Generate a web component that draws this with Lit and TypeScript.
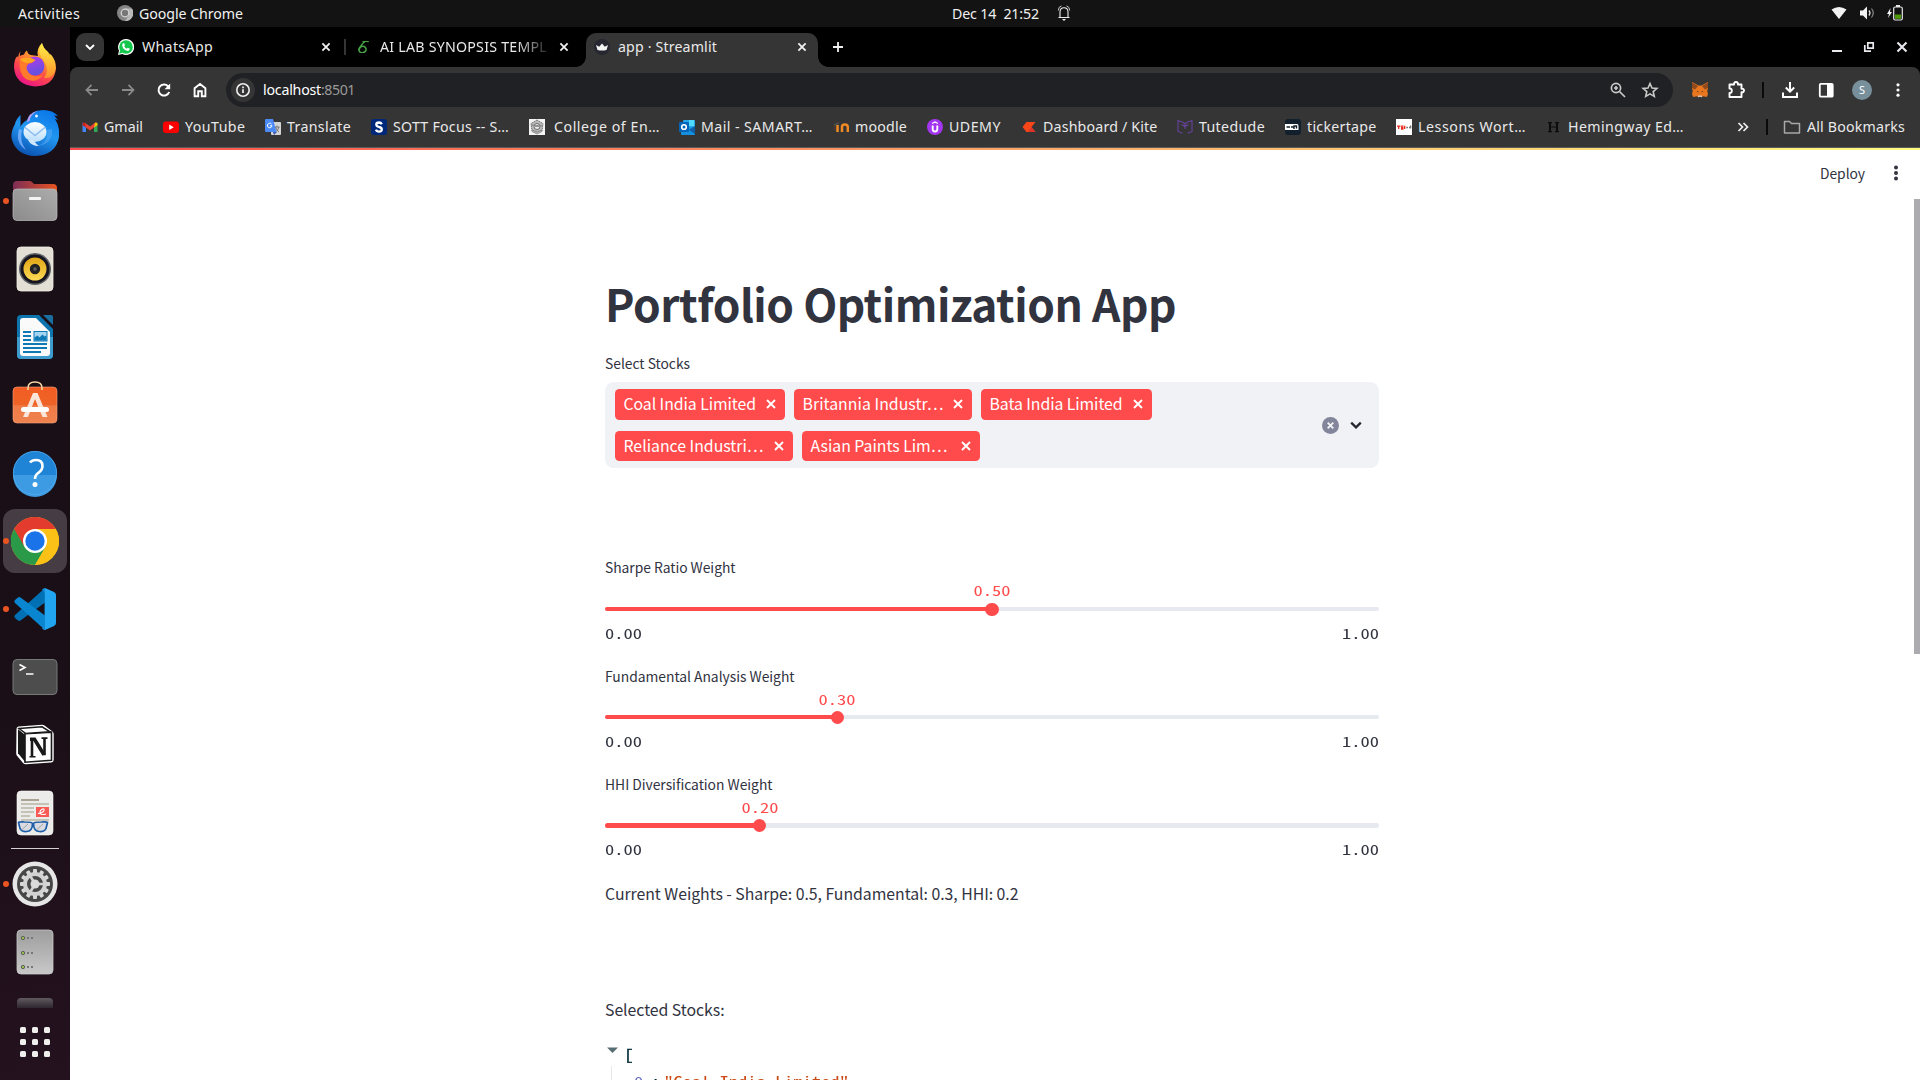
import { LitElement, html, css, svg } from "lit";
import { customElement, property, query } from "lit/decorators.js";

/** One line of text tracked out or in so that it fills a given width. */
@customElement("fit-label")
export class FitLabel extends LitElement {
  @property() text = "";
  @property({ type: Number }) w = 0;
  @query("span") span!: HTMLSpanElement;
  static styles = css`
    :host { display: block; flex: none; white-space: pre; }
    span { display: inline-block; }
  `;
  updated() {
    const s = this.span;
    s.style.letterSpacing = "0px";
    if (!this.w) return;
    const natural = s.getBoundingClientRect().width;
    const gap = (this.w - natural) / this.text.length;
    s.style.letterSpacing = gap.toFixed(3) + "px";
  }
  render() {
    return html`<span>${this.text}</span>`;
  }
}

/** Monospaced text whose half-em glyphs are widened to a 0.66em cell. */
@customElement("code-text")
export class CodeText extends LitElement {
  @property() text = "";
  static styles = css`
    :host { display: block; flex: none; white-space: pre; height: 20px;
      font: 14px/20px "Noto Sans Mono CJK SC", "Liberation Mono", monospace; }
    span { display: inline-block; transform: scaleX(1.32); transform-origin: 0 50%; }
  `;
  render() {
    return html`<div style="width:${(this.text.length * 9.24).toFixed(2)}px"><span>${this.text}</span></div>`;
  }
}

const label = (text: string, w: number) => html`<fit-label .text=${text} .w=${w}></fit-label>`;
const code = (text: string) => html`<code-text .text=${text}></code-text>`;
const icon = (size: number, body: unknown, box = size) =>
  html`<svg class="ic" width=${size} height=${size} viewBox="0 0 ${box} ${box}" fill="none">${body}</svg>`;

const cross = (c: string, sw = 2) => icon(12, svg`<path d="M2.4 2.4l7.2 7.2M9.6 2.4L2.4 9.6" stroke=${c} stroke-width=${sw}/>`);

/* ---------- dock icons, 48 x 48 ---------- */
const firefox = svg`
  <defs>
    <linearGradient id="ff1" x1=".8" y1="0" x2=".3" y2="1"><stop offset="0" stop-color="#fff44f"/><stop offset=".35" stop-color="#ffa02d"/><stop offset=".65" stop-color="#ff4a4a"/><stop offset="1" stop-color="#e8128a"/></linearGradient>
    <linearGradient id="ff2" x1=".3" y1="0" x2=".6" y2="1"><stop offset="0" stop-color="#b03be8"/><stop offset="1" stop-color="#5b54e0"/></linearGradient>
    <linearGradient id="ff3" x1="0" y1="0" x2="0" y2="1"><stop offset="0" stop-color="#fff04a"/><stop offset="1" stop-color="#ff9a2a"/></linearGradient>
  </defs>
  <path d="M9.500 10 Q8.500 13 9 15 Q10 14 13 13.500 Q14 10.500 16 9.500 Q16.500 13 19.500 14 L27 15 Q25 8 31 2 Q32 7 37 11 L38.500 15 L39.500 13 Q45 19 45 27 Q43.500 45 24 45.500 Q4 44 3 26 Q3 18 6.500 15 L7 17 Q7.500 12.500 9.500 10Z" fill="url(#ff1)"/>
  <path d="M31 2 Q32 7 37 11 Q44.500 18 44.500 28 Q42 38 33 37 Q39 29 33 20 Q25 11 31 2Z" fill="url(#ff3)" opacity=".85"/>
  <circle cx="24" cy="25" r="9.500" fill="url(#ff2)"/>
  <path d="M9 19 Q13 15.500 18 17 Q23 17.500 24 19.500 Q22 22 18 22.500 Q14.500 24.500 16 29 Q20 38 32 34 Q25 43 15 38 Q7 32 9 19Z" fill="#ff7a2b"/>
  <path d="M9 18 Q14 15.500 18 17 Q23 17.500 24 19.500 Q21 21.500 17 22 Q12 22 9 18Z" fill="#ffa820"/>`;
const thunderbird = svg`
  <defs><linearGradient id="tb1" x1=".8" y1="0" x2=".4" y2="1"><stop offset="0" stop-color="#0a76e8"/><stop offset=".5" stop-color="#2196f0"/><stop offset="1" stop-color="#0b55b4"/></linearGradient>
  <linearGradient id="tb2" x1="0" y1="0" x2="0" y2="1"><stop offset="0" stop-color="#ffffff"/><stop offset="1" stop-color="#b9defa"/></linearGradient></defs>
  <path d="M4 15 Q-1 24 1 31 Q6 46.500 24 47 Q45 46 48 28 Q49 17 44 10 L47 11 L43 6.500 L47 7 Q42 1 32 1 Q20 1 16 11 Q11 14 9.500 18 L9.500 6 Q5 10 4 15Z" fill="url(#tb1)"/>
  <path d="M16 13 Q17 4 27 1.500 Q19 6 18.500 12Z" fill="#b79cf0"/>
  <path d="M8 20 Q4 34 15 41 Q8 32 11 21Z" fill="#7fb5ff" opacity=".8"/>
  <ellipse cx="24" cy="23" rx="11.500" ry="10" fill="url(#tb2)"/>
  <path d="M13.500 18 L24 26.500 L34.500 18" stroke="#8cbcf0" stroke-width="1.500"/>
  <path d="M17 31 Q20 37 28 37 Q23 33 23 31Z" fill="#cfe7ff"/>
  <path d="M36 21 Q38 32 27 37 Q42 35 41 20Z" fill="#5eaef8" opacity=".5"/>
  <circle cx="25.500" cy="7" r="1.500" fill="#eaf4ff"/>`;
const files = svg`
  <defs><linearGradient id="fi1"><stop offset="0" stop-color="#7c2d56"/><stop offset="1" stop-color="#e95420"/></linearGradient>
  <linearGradient id="fi2" x1="0" y1="1" x2="1" y2="0"><stop offset="0" stop-color="#8b8b8b"/><stop offset="1" stop-color="#acacac"/></linearGradient></defs>
  <path d="M2 8q0-4 4-4h13q1.500 0 2.500 1.500L23 7h19q4 0 4 4v10H2z" fill="url(#fi1)"/>
  <rect x="2" y="12" width="44" height="31.500" rx="4" fill="url(#fi2)" stroke="#bdbdbd" stroke-width=".7"/>
  <rect x="18" y="20" width="12" height="3" rx="1" fill="#f4f4f4"/>`;
const speaker = svg`
  <defs><radialGradient id="sp1"><stop offset="0" stop-color="#777"/><stop offset=".5" stop-color="#222"/></radialGradient>
  <linearGradient id="sp2" x1="0" y1="0" x2="0" y2="1"><stop offset="0" stop-color="#e2a516"/><stop offset="1" stop-color="#fbda55"/></linearGradient></defs>
  <rect x="6" y="2" width="36" height="44" rx="4" fill="#e3dfd4" stroke="#f2efe8" stroke-width=".8"/>
  <circle cx="24" cy="24" r="16" fill="#5f6265"/><circle cx="24" cy="24" r="14.500" fill="#17151f"/>
  <circle cx="24" cy="24" r="11.500" fill="url(#sp2)"/><circle cx="24" cy="24" r="5.200" fill="url(#sp1)"/>`;
const writer = svg`
  <path d="M10 2h18l14 14v26q0 4-4 4H10q-4 0-4-4V6q0-4 4-4z" fill="#0d74ad"/>
  <path d="M6 24h36v18q0 4-4 4H10q-4 0-4-4z" fill="#3d9bce"/>
  <path d="M32 2h8q2 0 2 2v8z" fill="#1a6f9f"/>
  <path d="M12 5h13l14 14v21q0 3-3 3H12q-3 0-3-3V8q0-3 3-3z" fill="#fafafa"/>
  <path d="M12 19h8M12 23h8M12 27h8M12 31h24M12 35h24M12 39h18" stroke="#0d79b5" stroke-width="2"/>
  <rect x="23" y="18.500" width="13" height="9.500" fill="#a5d4f0" stroke="#0d79b5"/>
  <path d="M23.500 27.500v-3l3-2 2 2 3-3 2 2 2-1v5z" fill="#0d79b5"/>`;
const software = svg`
  <defs><linearGradient id="so1" x1="0" y1="0" x2="0" y2="1"><stop offset="0" stop-color="#f25c22"/><stop offset=".5" stop-color="#ee6427"/><stop offset=".52" stop-color="#f07a45"/><stop offset="1" stop-color="#ee8350"/></linearGradient></defs>
  <rect x="2" y="6" width="44" height="36" rx="4" fill="url(#so1)" stroke="#f7a27c" stroke-width=".6"/>
  <path d="M17 9V7q0-6 7-6t7 6v2" stroke="#f8d9a5" stroke-width="1.500"/>
  <path d="M22 12h4.500l10 24h-5L24 18l-7 18h-5z" fill="#fbe4da"/>
  <rect x="10" y="26" width="28" height="5" rx="2.500" fill="#fff"/>`;
const help = svg`
  <circle cx="24" cy="24" r="22" fill="#1f84d6"/>
  <path d="M2 26h44a22 22 0 0 1-44 0z" fill="#3c9be2"/>
  <circle cx="24" cy="24" r="21.600" stroke="#54aaea" stroke-width=".8"/>
  <path d="M19 13.500Q21 11 25 11q6.500 0 6.500 6 0 4-3.800 6.600-3.700 2.400-3.700 6.400" stroke="#fff" stroke-width="2.600"/>
  <circle cx="24" cy="35.500" r="2.500" fill="#fff"/>`;
const chrome = svg`
  <circle cx="24" cy="24" r="24" fill="#fbc116"/>
  <path d="M24 24L3.200 12A24 24 0 0 0 24 48l12-20z" fill="#2a9a48"/>
  <path d="M3.200 12A24 24 0 0 1 44.800 12H24L13.600 30z" fill="#e33b2e"/>
  <path d="M44.800 12H24l10.400 18L24 48A24 24 0 0 0 44.800 12z" fill="#fbc116"/>
  <circle cx="24" cy="24" r="12" fill="#fff"/><circle cx="24" cy="24" r="9.700" fill="#1a73e8"/>`;
const vscode = svg`
  <path d="M34 3L4 30q-1.500 1.500 0 3l3 2.600q1 .8 2.500 0L36 16z" fill="#0070b5"/>
  <path d="M34 45L4 18q-1.500-1.500 0-3l3-2.600q1-.8 2.500 0L36 32z" fill="#0a86d1"/>
  <path d="M34 3l9 4q2 1 2 3v28q0 2-2 3l-9 4z" fill="#22a5f1"/>
  <path d="M34 3v42q-1.500 0-3-1.500l2.500-3V8L31 4.500Q32.500 3 34 3z" fill="#1487d0"/>`;
const terminal = svg`
  <rect x="2" y="6.500" width="44" height="35" rx="4" fill="#4d4d4d" stroke="#747a78" stroke-width="1"/>
  <path d="M8.500 11.500l5.500 3-5.500 3" stroke="#fff" stroke-width="1.600"/><path d="M15 21h7.500" stroke="#fff" stroke-width="1.500"/>`;
const notion = svg`
  <g transform="translate(0 .8)"><path d="M5.500 7q0-2 2-2.200L31 3q1.500 0 2.500.8l8 6q1.200 1 1.200 2.500V38q0 2.500-2.500 2.700L15 42.400q-2 0-3-1.300L6 34q-.8-1-.8-2.500z" fill="#fff"/>
  <path d="M7 7.500l7 5.500v27l-7-8.500z" fill="#191919"/><path d="M14 12l26.500-1.600v28L14 40.400z" fill="#fff" stroke="#191919" stroke-width="1.600"/>
  <path d="M8 6.700L31 5l8 5-24.500 1.600z" fill="#fff" stroke="#191919" stroke-width="1.400"/>
  <path d="M21 17.500v17M33.500 16.500v17" stroke="#191919" stroke-width="2.600"/><path d="M19 17.500h4.500l9.500 15.500" stroke="#191919" stroke-width="3.600"/>
  <path d="M18.500 35h6M30.500 16.300h6" stroke="#191919" stroke-width="1.600"/></g>`;
const viewer = svg`
  <rect x="6" y="2" width="36" height="44" rx="4" fill="#ebebea" stroke="#fafafa" stroke-width=".6"/>
  <path d="M10 11h18" stroke="#aaa392" stroke-width="2"/>
  <path d="M10 15h28M10 19h13M10 23h13M10 27h9M10 31h28" stroke="#c5c2b6" stroke-width="2"/>
  <rect x="25" y="18" width="13" height="10" fill="#f75b54"/>
  <path d="M27 24.500q5-.5 6-3 .5-2-1.500-1.500-3 1.500-2.500 4 .5 2.500 6 1" stroke="#fff" stroke-width="1.100"/>
  <path d="M7.500 33.500q.5-.8 6-.5 8 0 8 1.500 0 8-6 8-6.500.5-7-5zM36.500 33.500q-.5-.8-6-.5-8 0-8 1.500 0 8 6 8 6.500.5 7-5z" fill="#d9dbe0" stroke="#1e5ea8" stroke-width="1.700"/>
  <path d="M11 40.500l6-5.500M26 40.500l6-5.500" stroke="#a2a4a8"/>`;
const teeth = Array.from({ length: 12 }, (_, i) => svg`<rect x="22" y="9" width="4" height="5" rx="1" fill="#d9d9d9" transform="rotate(${i * 30} 24 24)"/>`);
const settings = svg`
  <circle cx="24" cy="24" r="22.500" fill="#e6e6e6"/><circle cx="24" cy="24" r="18" fill="#474747"/>
  ${teeth}<circle cx="24" cy="24" r="10" stroke="#d2d2d2" stroke-width="4"/>
  <path d="M24 24L19 15.500M24 24L19 32.500M24 24h10" stroke="#d2d2d2" stroke-width="2.600"/>
  <circle cx="24" cy="24" r="4.500" fill="#dadada"/>`;
const disk = svg`
  <defs><linearGradient id="dk" x1="0" y1="0" x2="0" y2="1"><stop offset="0" stop-color="#9d9d9d"/><stop offset="1" stop-color="#c8c8c8"/></linearGradient></defs>
  <rect x="6" y="2" width="36" height="44" rx="4" fill="url(#dk)" stroke="#c9c9c9" stroke-width=".8"/>
  ${[10, 25, 39].map((y) => svg`<circle cx="12" cy=${y} r="1.700" fill="#97c04a" stroke="#5c6158" stroke-width="1"/><path d="M16 ${y}h2M20 ${y}h2" stroke="#777" stroke-width="2"/>`)}`;

interface DockItem { art: unknown; running?: boolean; active?: boolean }
const dockTop: DockItem[] = [
  { art: firefox }, { art: thunderbird }, { art: files, running: true }, { art: speaker }, { art: writer },
  { art: software }, { art: help }, { art: chrome, running: true, active: true }, { art: vscode, running: true },
  { art: terminal }, { art: notion }, { art: viewer },
];
const dockBottom: DockItem[] = [{ art: settings, running: true }, { art: disk }];

/* ---------- bookmark icons, 16 x 16 ---------- */
const bm = {
  gmail: svg`<path d="M.5 3.500V13H4V7z" fill="#4285f4"/><path d="M12 7v6h3.500V3.500z" fill="#34a853"/><path d="M12 4.500l1.500-1q2-.5 2 1.500v1.200L12 8.500z" fill="#fbbc04"/><path d="M.5 6.200V5q0-2 2-1.500L4 4.500v4z" fill="#c5221f"/><path d="M3 3.700l5 3.800 5-3.800L12 8.500l-4 3-4-3z" fill="#ea4335"/>`,
  youtube: svg`<rect x="0" y="2.500" width="16" height="11.500" rx="3" fill="#f00"/><path d="M6.200 5.500v5.400l4.600-2.700z" fill="#fff"/>`,
  translate: svg`<rect x="6" y="3" width="10" height="13" rx="1" fill="#d4d4d4"/><path d="M9.500 8h5M12 6.500V8M10.500 8q1 3.500 3.500 5M14 8q-1 3.500-3.500 5" stroke="#666" stroke-width=".8"/><path d="M8 13h4l-3 3z" fill="#3a56b5"/><path d="M1 0h7l3.500 13H1q-1 0-1-1V1q0-1 1-1z" fill="#4c8bf5"/><path d="M6.500 5A2.300 2.300 0 1 0 7 6.800H5" stroke="#fff" stroke-width="1"/>`,
  sott: svg`<rect x="0" y="0" width="16" height="16" rx="3" fill="#00287a"/><path d="M10.800 5.200Q10 3.500 8 3.500 5.300 3.600 5.300 5.500T8 8q2.800.5 2.800 2.500T8 12.600q-2.300 0-3-2" stroke="#fff" stroke-width="2.300"/>`,
  college: svg`<rect width="16" height="16" fill="#f4f4f4"/><path d="M8 1l6 3.500-1 8L8 15l-5-2.500-1-8z" fill="#b9b9b9" stroke="#777" stroke-dasharray="1.500 .7"/><circle cx="8" cy="7.500" r="3" fill="#eee" stroke="#6a6a6a"/><path d="M2 6l12 1M6 7.500h4M3 11l5 2 5-2" stroke="#777" stroke-width=".8"/>`,
  outlook: svg`<rect x="4" y="1" width="12" height="13" rx="1" fill="#28a8ea"/><rect x="10" y="1" width="5" height="6" fill="#50d9ff"/><path d="M2 9l14-1v7q0 1-1 1H3q-1 0-1-1z" fill="#1490df"/><path d="M10 11l6-4v8z" fill="#0f5fa8"/><rect x="0" y="3" width="10" height="10" rx="1" fill="#0364b8"/><circle cx="5" cy="8" r="2.300" stroke="#fff" stroke-width="1.600"/>`,
  moodle: svg`<path d="M1 6l5-2" stroke="#4b4b4b" stroke-width="2"/><path d="M1.500 7v4" stroke="#5b3b28"/><path d="M4.500 13V6M9 13V8q0-2.500 2.800-2.500T14.800 8v5" stroke="#f08a24" stroke-width="2.500"/>`,
  udemy: svg`<circle cx="8" cy="8" r="8" fill="#a435f0"/><path d="M5.200 4.600L8 3l2.800 1.600" stroke="#fff" stroke-width="1.200"/><path d="M5.700 6.500V10q0 2.500 2.300 2.500T10.300 10V6.500" stroke="#fff" stroke-width="1.900"/>`,
  kite: svg`<path d="M5.500 3h9L10.500 8l4 5h-9L1.500 8z" fill="#f6461a"/><path d="M10.500 8l4 5H7z" fill="#db342b"/>`,
  tutedude: svg`<path d="M1 13V1.500l5 1.800L8 5l2-1.700 5-1.800V13M1 12.500l4.500 1.800M15 12.500l-4.500 1.800M8 5v5M4.500 5.500L8 7.500l3.500-2" stroke="#66429a" stroke-width="1.100"/>`,
  ticker: svg`<rect width="16" height="16" rx="3" fill="#12202e"/><path d="M0 5h12q1.500 0 1.500 2v4H0z" fill="#fff"/><path d="M1.500 8H5M6 8h2.500M9 10V7h2.500v2.500" stroke="#12202e" stroke-width="1.400"/>`,
  lessons: svg`<rect width="16" height="16" fill="#fff"/><path d="M1 7.200h3.500M2.700 7v3M5 7.200h2.500M5 8.700h2.500M5 10h2.500M8.700 6.700v3.300" stroke="#e62b1e" stroke-width="1.300"/><path d="M10.300 8.500h1.700M13 8.500h2M14.600 6.500v3" stroke="#777" stroke-width="1.400"/>`,
  hemingway: svg`<path d="M4 4v8.500M11 4v8.500" stroke="#0c0c0c" stroke-width="2"/><path d="M2 3.700h4M2 12.700h4M9 3.700h4M9 12.700h4M4 8h7" stroke="#0c0c0c" stroke-width="1.200"/>`,
};
interface Bookmark { art: unknown; text: string; w: number; pitch: number; gap?: number }
const bookmarks: Bookmark[] = [
  { art: bm.gmail, text: "Gmail", w: 39, pitch: 81 },
  { art: bm.youtube, text: "YouTube", w: 60.5, pitch: 102 },
  { art: bm.translate, text: "Translate", w: 64, pitch: 106 },
  { art: bm.sott, text: "SOTT Focus -- S…", w: 116, pitch: 158 },
  { art: bm.college, text: "College of En…", w: 106, pitch: 150, gap: 9 },
  { art: bm.outlook, text: "Mail - SAMART…", w: 112, pitch: 154 },
  { art: bm.moodle, text: "moodle", w: 52, pitch: 94 },
  { art: bm.udemy, text: "UDEMY", w: 52, pitch: 94 },
  { art: bm.kite, text: "Dashboard / Kite", w: 114.5, pitch: 156 },
  { art: bm.tutedude, text: "Tutedude", w: 66, pitch: 108 },
  { art: bm.ticker, text: "tickertape", w: 69.5, pitch: 111 },
  { art: bm.lessons, text: "Lessons Wort…", w: 108, pitch: 150 },
  { art: bm.hemingway, text: "Hemingway Ed…", w: 116, pitch: 140 },
];

@customElement("ubuntu-dock")
export class UbuntuDock extends LitElement {
  static styles = css`
    :host { display: flex; flex-direction: column; width: 70px; flex: none; padding-top: 4px; box-sizing: border-box;
      overflow: hidden; background: linear-gradient(170deg, #190f17 0%, #1a0f16 60%, #24121f 100%); }
    .slot { height: 68px; flex: none; display: grid; grid-template-columns: 11px 48px 11px; align-items: center; }
    .dot { width: 6px; height: 6px; border-radius: 50%; background: #e95420; margin-left: 3px; }
    .blank { background: none; }
    .active { background: #463d44; border-radius: 12px; height: 64px; margin: 2px 3px; grid-template-columns: 8px 48px 8px; }
    .active .dot { margin-left: 0; }
    .ic { display: block; }
    .rule { height: 1px; flex: none; margin: 1px 11px; background: #d5d1d3; }
    .peek { height: 10px; flex: none; width: 36px; margin: 12px 17px 0; border-radius: 4px 4px 0 0; background: linear-gradient(#605a5f, #2f2630); }
    .apps { display: grid; grid-template-columns: repeat(3, 6px); grid-auto-rows: 6px; gap: 6px; margin: 19px 20px 0; }
    .apps i { background: #f0efee; border-radius: 1.5px; }
  `;
  private slotFor(d: DockItem) {
    return html`<div class="slot ${d.active ? "active" : ""}"><span class="dot ${d.running ? "" : "blank"}"></span>${icon(48, d.art)}</div>`;
  }
  render() {
    return html`${dockTop.map((d) => this.slotFor(d))}
      <div class="rule"></div>
      ${dockBottom.map((d) => this.slotFor(d))}
      <div class="peek"></div>
      <div class="apps">${Array.from({ length: 9 }, () => html`<i></i>`)}</div>`;
  }
}

@customElement("top-bar")
export class TopBar extends LitElement {
  static styles = css`
    :host { display: grid; grid-template-columns: 1fr auto 1fr; align-items: center; height: 27px; background: #131313;
      color: #f0f0f0; font-size: 14.2px; }
    .l, .m, .r { display: flex; align-items: center; height: 27px; box-sizing: border-box; }
    .l, .m { line-height: 25px; padding-bottom: 1px; }
    .l { padding-left: 18px; }
    .l .ic { margin: 0 6px 0 37px; }
    .m { padding-left: 104px; }
    .m .ic { margin-left: 17px; }
    .r { justify-content: flex-end; gap: 12px; padding-right: 17px; padding-bottom: 1px; }
    .ic { display: block; flex: none; }
  `;
  render() {
    return html`
      <div class="l">${label("Activities", 62)}
        ${icon(16, svg`<circle cx="8" cy="8" r="8" fill="#858585"/><path d="M8 3.500h7A8 8 0 0 1 8 16l4-6z" fill="#b9b9b9"/><circle cx="8" cy="8" r="4.400" fill="#d8d8d8"/><circle cx="8" cy="8" r="3.200" fill="#777"/>`)}
        ${label("Google Chrome", 104)}</div>
      <div class="m">${label("Dec 14  21:52", 87)}
        ${icon(16, svg`<path d="M2.500 12.500h11M4 12V7q0-4.300 4-4.300T12 7v5" stroke="#eee" stroke-width="1.100"/><path d="M5.500 1Q2.500 1.500 2.300 5.500M10.500 1q3 .5 3.200 4.500" stroke="#ccc" stroke-width="1"/><path d="M6 14h4l-2 2z" fill="#eee"/>`)}</div>
      <div class="r">
        ${icon(16, svg`<path d="M.5 4.500Q8-.7 15.500 4.500L8 14z" fill="#f2f2f2"/>`)}
        ${icon(16, svg`<path d="M1 5.500h3l4-4v13l-4-4H1z" fill="#f2f2f2"/><path d="M10 5.500q2 2.500 0 5" stroke="#ddd" stroke-width="1.300"/><path d="M12.500 3.500q3.500 4.500 0 9" stroke="#8a8a8a" stroke-width="1.200"/>`)}
        ${icon(16, svg`<path d="M3.500 3L0 9h2l-1 4 4-6H3z" fill="#f2f2f2"/><rect x="6.700" y="2" width="8.600" height="13" rx="1.500" stroke="#e8e8e8" stroke-width="1.200"/><rect x="9" y="0" width="4" height="2" fill="#e8e8e8"/><rect x="8" y="9.500" width="6" height="4.300" fill="#4e9a06"/>`)}
      </div>`;
  }
}

@customElement("browser-chrome")
export class BrowserChrome extends LitElement {
  static styles = css`
    :host { display: block; color: #e9e9e9; font-size: 14.2px; background: #000; }
    .ic { display: block; flex: none; }
    .tabs { height: 40px; display: flex; align-items: center; box-sizing: border-box; padding-left: 6px; line-height: 40px; }
    .menu { width: 28px; height: 28px; border-radius: 9px; background: #353535; display: grid; place-items: center; margin-right: 14px; }
    .tab { display: flex; align-items: center; height: 40px; }
    .tab .name { margin-left: 8px; flex: 1; min-width: 0; overflow: hidden; }
    .t1 { width: 214px; }
    .sep { width: 2px; height: 16px; background: #353535; margin: 0 11px 0 12px; }
    .t2 { width: 213px; }
    .t2 .name { flex: none; width: 167px; margin-left: 11px; margin-right: 11px;
      -webkit-mask-image: linear-gradient(90deg, #000 82%, transparent 103%); }
    .t3 { width: 232px; height: 34px; margin: 6px 0 0 16px; padding: 0 10px 0 8px; box-sizing: border-box; background: #353535;
      border-radius: 10px 10px 0 0; line-height: 28px; align-items: flex-start; position: relative; }
    .t3 > .ic { margin-top: 6px; }
    .t3 > .ic.x { margin-top: 8px; }
    .t3::before, .t3::after { content: ""; position: absolute; bottom: 0; width: 10px; height: 10px; }
    .t3::before { left: -10px; background: radial-gradient(circle at 0 0, transparent 9.5px, #353535 10px); }
    .t3::after { right: -10px; background: radial-gradient(circle at 100% 0, transparent 9.5px, #353535 10px); }
    .plus { margin-left: 14px; }
    .win { margin-left: auto; display: flex; gap: 20px; padding-right: 12px; }
    .win .ic + .ic + .ic { margin-left: 1px; }
    .tools { height: 46px; background: #353535; border-radius: 8px 8px 0 0; display: flex; align-items: center; padding: 0 12px; }
    .nav { display: flex; gap: 16px; margin-right: 16px; }
    .omni { width: 1448px; height: 34px; border-radius: 17px; background: #202124; display: flex; align-items: center;
      box-sizing: border-box; padding: 0 13px 0 5px; line-height: 34px; }
    .info { width: 24px; height: 24px; border-radius: 50%; background: #353535; display: grid; place-items: center; margin-right: 8px; }
    .host { color: #fff; }
    .port { color: #9a9a9a; margin-right: auto; }
    .omni .star { margin-left: 12px; }
    .ext { display: flex; align-items: center; margin-left: 18.500px; }
    .ext .puzzle { margin-left: 18.500px; }
    .ext .bar { width: 2px; height: 16px; background: #0a0a0a; margin: 0 16px 0 16px; }
    .ext .panel { margin: 0 16px; }
    .ext .kebab { margin-left: 16px; }
    .avatar { width: 20px; height: 20px; border-radius: 50%; background: #78909c; font-size: 11px; line-height: 20px; text-align: center; color: #fff; }
    .marks { height: 34px; background: #353535; display: flex; align-items: center; padding: 0 15px 6px 12px; line-height: 28px; box-sizing: border-box; }
    .mark { display: flex; align-items: center; flex: none; }
    .more { margin: 0 17px 0 51px; }
    .marks .bar { width: 2px; height: 16px; background: #0a0a0a; margin-right: 15px; }
    .marks .all { margin-left: 6px; }
    .edge { height: 1px; background: #5b5b5b; }
  `;
  render() {
    const b = "#8a8a8a", w = "#fff";
    return html`
      <div class="tabs">
        <div class="menu">${icon(12, svg`<path d="M2 4l4 4 4-4" stroke="#fff" stroke-width="1.900"/>`)}</div>
        <div class="tab t1">
          ${icon(16, svg`<path d="M8 0a8 8 0 1 1-3.700 15L0 16l1-4.200A8 8 0 0 1 8 0z" fill="#fff"/><circle cx="8" cy="8" r="6.800" fill="#13c74d"/><path d="M1.200 14.800l1-3.800 2.600 2.800z" fill="#13c74d"/><path d="M5 4.200l1.100-.1L7 6.200l-.8 1Q7 8.900 8.800 9.700l.9-.9 2.100 1q0 1.900-2 2.100Q5 11.200 4.200 6.500 4.100 5.200 5 4.200z" fill="#fff"/>`)}
          <div class="name">${label("WhatsApp", 71)}</div>${cross("#f0f0f0", 1.8)}
        </div>
        <div class="sep"></div>
        <div class="tab t2">
          ${icon(12, svg`<path d="M11.500 .2Q9.500 -1.300 5.500 0M8.500 -.5Q4 2.500 2 8.500" stroke="#46a247" stroke-width="1.500" transform="translate(0 .6)"/><ellipse cx="5.500" cy="8.500" rx="3.600" ry="3.200" stroke="#46a247" stroke-width="1.600" transform="rotate(-20 5.500 8.500)"/>`)}
          <div class="name">${label("AI LAB SYNOPSIS TEMPL", 167)}</div>${cross("#f0f0f0", 1.8)}
        </div>
        <div class="tab t3">
          ${icon(16, svg`<circle cx="8" cy="8" r="8" fill="#262730"/><path d="M2 6l3.200 1.700L8 4.500l2.800 3.200L14 6l-1.500 5q-4.500 1-9 0z" fill="#f4f4f4"/>`)}
          <div class="name">${label("app · Streamlit", 99)}</div>
          <svg class="ic x" width="12" height="12" viewBox="0 0 12 12"><path d="M2.400 2.400l7.200 7.200M9.600 2.400L2.400 9.600" stroke="#f0f0f0" stroke-width="1.800"/></svg>
        </div>
        <div class="plus">${icon(12, svg`<path d="M6 1v10M1 6h10" stroke="#f0f0f0" stroke-width="1.800"/>`)}</div>
        <div class="win">
          ${icon(12, svg`<path d="M1 10h10" stroke="#e9e9ee" stroke-width="2"/>`)}
          ${icon(12, svg`<path d="M4.800 1.800h5.400v5.400H4.800z" stroke="#e9e9ee" stroke-width="1.700"/><path d="M1.800 4v6.200H8" stroke="#e9e9ee" stroke-width="1.700"/>`)}
          ${icon(12, svg`<path d="M1.500 1.500l9 9M10.500 1.500l-9 9" stroke="#e9e9ee" stroke-width="2.100"/>`)}
        </div>
      </div>
      <div class="tools">
        <div class="nav">
          ${icon(20, svg`<path d="M16 10H5M9.500 4.800L4.500 10l5 5.200" stroke=${b} stroke-width="1.800"/>`)}
          ${icon(20, svg`<path d="M4 10h11M10.500 4.800l5 5.200-5 5.200" stroke=${b} stroke-width="1.800"/>`)}
          ${icon(20, svg`<path d="M15.200 12A5.500 5.500 0 1 1 14 6.200l1 1.200" stroke=${w} stroke-width="2"/><path d="M16.200 3.500v5.700h-5.700z" fill=${w}/>`)}
          ${icon(20, svg`<path d="M4.600 16.200V8.300L10 4l5.400 4.300v7.900h-3.600v-5H8.200v5z" stroke=${w} stroke-width="1.900"/>`)}
        </div>
        <div class="omni">
          <div class="info">${icon(16, svg`<circle cx="8" cy="8" r="6.200" stroke="#f0f0f0" stroke-width="1.600"/><path d="M8 7.200V11M8 4.600v1.600" stroke="#f0f0f0" stroke-width="1.700"/>`)}</div>
          <span class="host">${label("localhost", 58)}</span><span class="port">${label(":8501", 34)}</span>
          ${icon(20, svg`<circle cx="8" cy="8" r="4.600" stroke="#c9c9c9" stroke-width="1.700"/><path d="M11.500 11.500L17 17M8 6v4M6 8h4" stroke="#c9c9c9" stroke-width="1.700"/>`)}
          <span class="star">${icon(20, svg`<path d="M10 3.500l2 4.500 4.900.4-3.700 3.200 1.100 4.800L10 13.900l-4.300 2.500 1.100-4.800L3.100 8.400 8 8z" stroke="#c9c9c9" stroke-width="1.600"/>`)}</span>
        </div>
        <div class="ext">
          ${icon(16, svg`<path d="M0 0l6.500 3.500h3L16 0v6.500L15.200 9l.8 3-1.200 3-4-.8L9.500 16h-3l-1.300-1.800-4 .8L0 12l.8-3L0 6.500z" fill="#e8761e"/><path d="M0 .5L6 4 3 7.500 0 6zM16 .5L10 4l3 3.500L16 6z" fill="#8f4a1e"/><path d="M6 13.500h4V16H6z" fill="#d5bfb2"/><path d="M6.300 15h3.400v1H6.300z" fill="#2d2d2d"/><path d="M4.500 9l2 .5-.3 1zM11.500 9l-2 .5.300 1z" fill="#3a2a20"/>`)}
          <span class="puzzle">${icon(20, svg`<path d="M3.500 4.500h4.600q-.2-2.500 1.900-2.500t1.900 2.500h3.600v4.200q2.500-.2 2.500 1.800t-2.500 1.800V17h-12v-4q2.300.2 2.300-2.200T3.500 8.500z" stroke="#fff" stroke-width="1.900" stroke-linejoin="round"/>`)}</span>
          <i class="bar"></i>
          ${icon(20, svg`<path d="M10 2v9.500M5.800 7.500L10 11.700l4.200-4.200M3 12.500V17h14v-4.500" stroke="#fff" stroke-width="2"/>`)}
          <span class="panel">${icon(20, svg`<rect x="3.800" y="3.800" width="12.900" height="12.900" rx="1" stroke="#fff" stroke-width="1.800"/><path d="M11 4h5.500v12.500H11z" fill="#fff"/>`)}</span>
          <div class="avatar">S</div>
          <span class="kebab">${icon(20, svg`<circle cx="10" cy="4.800" r="1.600" fill="#fff"/><circle cx="10" cy="10" r="1.600" fill="#fff"/><circle cx="10" cy="15.200" r="1.600" fill="#fff"/>`)}</span>
        </div>
      </div>
      <div class="marks">
        ${bookmarks.map((m) => html`<div class="mark" style="width:${m.pitch}px;gap:${m.gap ?? 6}px">${icon(16, m.art)}${label(m.text, m.w)}</div>`)}
        <span class="more">${icon(12, svg`<path d="M1.500 2l4 4-4 4M6.500 2l4 4-4 4" stroke="#f0f0f0" stroke-width="1.700"/>`)}</span>
        <i class="bar"></i>
        ${icon(18, svg`<path d="M1.500 3.500h5l2 2h8v9.500h-15z" stroke="#a8a8a8" stroke-width="1.500" stroke-linejoin="round"/>`)}
        <span class="all">${label("All Bookmarks", 98)}</span>
      </div>
      <div class="edge"></div>`;
  }
}

@customElement("weight-slider")
export class WeightSlider extends LitElement {
  @property() name = "";
  @property({ type: Number }) w = 0;
  @property({ type: Number }) value = 0;
  static styles = css`
    :host { display: block; height: 108.2px; }
    .name { font-size: 13.87px; line-height: 22px; height: 22px; }
    .row { height: 20px; margin-top: 2px; display: flex; }
    .value { color: #ff4b4b; transform: translateX(-50%); }
    .track { height: 4.4px; margin-top: 6.5px; border-radius: 3px; background: #e6e9f0; }
    .fill { height: 100%; background: #ff4b4b; border-radius: 3px; display: flex; justify-content: flex-end; align-items: center; }
    .thumb { width: 13.2px; height: 13.2px; margin-right: -6.6px; flex: none; border-radius: 50%; background: #ff4b4b; }
    .ends { display: flex; justify-content: space-between; margin-top: 11.6px; }
  `;
  render() {
    const pct = this.value * 100;
    return html`
      <div class="name">${label(this.name, this.w)}</div>
      <div class="row"><span style="width:${pct}%"></span><span class="value">${code(this.value.toFixed(2))}</span></div>
      <div class="track"><div class="fill" style="width:${pct}%"><i class="thumb"></i></div></div>
      <div class="ends">${code("0.00")}${code("1.00")}</div>`;
  }
}

@customElement("streamlit-page")
export class StreamlitPage extends LitElement {
  static styles = css`
    :host { display: flex; flex-direction: column; flex: 1; min-height: 0; background: #fff; color: #31333f; overflow: hidden;
      font-family: "Noto Sans CJK SC", "Noto Sans", sans-serif; font-size: 15.84px; line-height: 24px; }
    .deco { height: 2px; flex: none; background: linear-gradient(90deg, #ff4b4b, #fffd80); }
    .head { height: 49px; flex: none; display: flex; align-items: center; justify-content: flex-end; box-sizing: border-box;
      padding: 0 14px 3px 0; font-size: 13.87px; gap: 21px; }
    .head fit-label { width: 45px; }
    .scroll { flex: 1; min-height: 0; display: flex; overflow: hidden; }
    .thumb { margin-left: auto; width: 6px; height: 455px; background: #acabb0; }
    .col { width: 774px; margin-left: 535px; flex: none; }
    .title { font-size: 44.3px; line-height: 59px; height: 58px; font-weight: 700; margin-top: 75px; }
    .lab { font-size: 13.87px; line-height: 22px; height: 22px; margin: 20px 0 8px; }
    .multi { height: 86px; box-sizing: border-box; border-radius: 8.8px; background: #f0f2f6; display: flex; align-items: center;
      padding: 0 15px 0 10px; margin-bottom: 88.400px; }
    .tags { display: flex; flex-wrap: wrap; gap: 11px 9px; width: 620px; }
    .tag { height: 30.400px; box-sizing: border-box; border-radius: 4.4px; background: #ff4b4b; color: #fff; line-height: 29px;
      display: flex; align-items: center; padding: 0 8.500px; justify-content: space-between; align-items: flex-start; }
    .tag .ic { margin-top: 9px; }
    .ic { display: block; flex: none; }
    .ctl { margin-left: auto; display: flex; align-items: center; gap: 9px; }
    .now { margin-top: .6px; }
    .sel { margin: 92px 0 23px; }
    .json { color: #002b36; }
    .open { display: flex; height: 20px; -webkit-text-stroke: .4px #002b36; }
    .open .ic { margin: 2px 6px 0 2px; }
    .open code-text { margin-top: -1px; }
    .body { border-left: 1px solid #e8e8e8; margin: 1px 0 0 6px; padding: 5px 0 0 22px; height: 40px; display: flex; }
    .k { color: #6c71c4; margin-right: 8px; }
    .s { color: #cb4b16; margin-left: 4px; }
  `;
  render() {
    const tags: [string, number, number][] = [
      ["Coal India Limited", 132.5, 170], ["Britannia Industr…", 141, 178], ["Bata India Limited", 133, 171],
      ["Reliance Industri…", 140, 178], ["Asian Paints Lim…", 137, 178],
    ];
    return html`
      <div class="deco"></div>
      <div class="head">${label("Deploy", 45)}${icon(20, svg`<circle cx="10" cy="4.500" r="2" fill="#31333f"/><circle cx="10" cy="10" r="2" fill="#31333f"/><circle cx="10" cy="15.500" r="2" fill="#31333f"/>`)}</div>
      <div class="scroll">
        <div class="col">
          <div class="title">${label("Portfolio Optimization App", 571)}</div>
          <div class="lab">${label("Select Stocks", 85)}</div>
          <div class="multi">
            <div class="tags">${tags.map(([t, w, box]) => html`<div class="tag" style="width:${box}px">${label(t, w)}${icon(12, svg`<path d="M2 2l8 8M10 2l-8 8" stroke="#fff" stroke-width="1.900"/>`)}</div>`)}</div>
            <div class="ctl">
              ${icon(17, svg`<circle cx="8.500" cy="8.500" r="8.500" fill="#83859a"/><path d="M5.700 5.700l5.600 5.600M11.300 5.700l-5.600 5.600" stroke="#f0f2f6" stroke-width="1.900"/>`)}
              ${icon(16, svg`<path d="M3.200 5.700L8 10.300l4.800-4.600" stroke="#262730" stroke-width="2.300"/>`)}
            </div>
          </div>
          <weight-slider .name=${"Sharpe Ratio Weight"} .w=${130.5} .value=${0.5}></weight-slider>
          <weight-slider .name=${"Fundamental Analysis Weight"} .w=${189.5} .value=${0.3}></weight-slider>
          <weight-slider .name=${"HHI Diversification Weight"} .w=${167.5} .value=${0.2}></weight-slider>
          <div class="now">${label("Current Weights - Sharpe: 0.5, Fundamental: 0.3, HHI: 0.2", 413.5)}</div>
          <div class="sel">${label("Selected Stocks:", 119.5)}</div>
          <div class="json">
            <div class="open">${icon(11, svg`<path d="M0 .5h11L5.500 6z" fill="#586e75"/>`)}${code("[")}</div>
            <div class="body"><span class="k">${code("0")}</span>${code(":")}<span class="s">${code('"Coal India Limited"')}</span></div>
          </div>
        </div>
        <div class="thumb"></div>
      </div>`;
  }
}

@customElement("app-root")
export class AppRoot extends LitElement {
  static styles = css`
    :host { display: flex; flex-direction: column; width: 1920px; height: 1080px; overflow: hidden; background: #000;
      font-family: "Noto Sans", "Open Sans", sans-serif; }
    .desk { flex: 1; min-height: 0; display: flex; }
    .window { flex: 1; min-width: 0; display: flex; flex-direction: column; }
  `;
  render() {
    return html`<top-bar></top-bar>
      <div class="desk"><ubuntu-dock></ubuntu-dock>
        <div class="window"><browser-chrome></browser-chrome><streamlit-page></streamlit-page></div></div>`;
  }
}
